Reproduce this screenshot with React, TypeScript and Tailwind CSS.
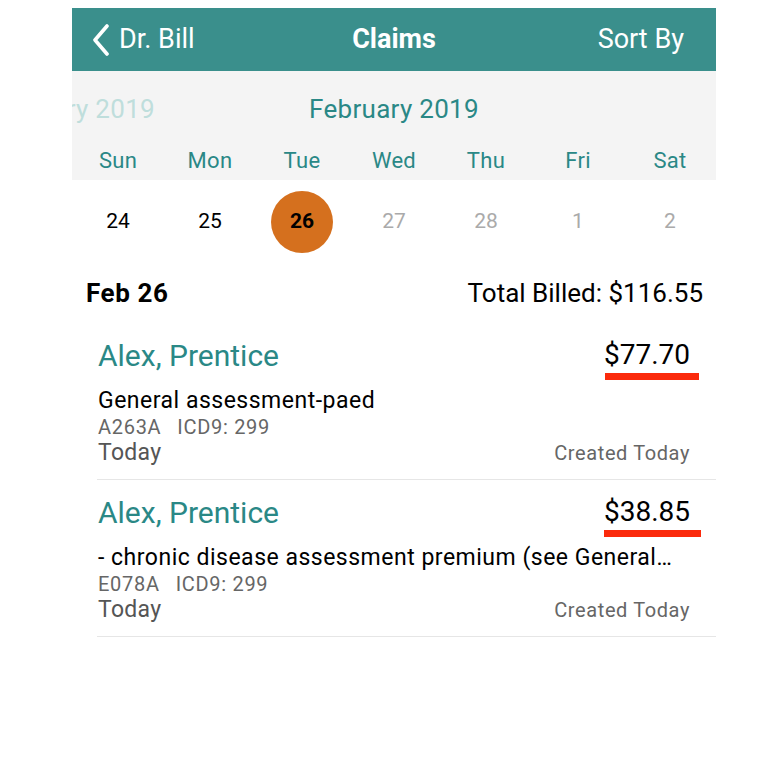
import React from "react";

const font = { fontFamily: "Roboto, 'Liberation Sans', sans-serif" };

function Claim({
  price,
  desc,
  code,
  ulRight,
  ulWidth,
}: {
  price: string;
  desc: string;
  code: string;
  ulRight: string;
  ulWidth: string;
}) {
  return (
    <div className="flex flex-col pt-[12px]">
      <div className="flex h-[40px] items-center justify-between pl-[26px] pr-[26px]">
        <span className="text-[30px] text-[#2a8886]">Alex, Prentice</span>
        <span className="relative text-[28px] text-black">
          {price}
          <span className={`absolute top-[39px] h-[7px] bg-[#fb2a0c] ${ulRight} ${ulWidth}`} />
        </span>
      </div>
      <div className="mt-[13px] flex h-[26px] items-center pl-[26px] text-[23px] tracking-[0.5px] text-black">
        <span className="whitespace-nowrap">{desc}</span>
      </div>
      <div className="flex h-[26px] items-center pl-[26px] text-[20px] tracking-[0.7px] text-[#666]">
        <span>{code}</span>
        <span className="ml-[16px]">ICD9: 299</span>
      </div>
      <div className="flex h-[26px] items-center justify-between pl-[26px] pr-[26px]">
        <span className="text-[23px] tracking-[0.3px] text-[#555]">Today</span>
        <span className="text-[20px] tracking-[0.6px] text-[#666]">Created Today</span>
      </div>
      <div className="mt-[13px] ml-[25px] h-px bg-[#e6e6e6]" />
    </div>
  );
}

export default function App() {
  const days = ["Sun", "Mon", "Tue", "Wed", "Thu", "Fri", "Sat"];
  const dates = [
    { d: "24", c: "text-black" },
    { d: "25", c: "text-black" },
    { d: "26", c: "sel" },
    { d: "27", c: "text-[#aaa]" },
    { d: "28", c: "text-[#aaa]" },
    { d: "1", c: "text-[#aaa]" },
    { d: "2", c: "text-[#aaa]" },
  ];
  return (
    <div className="h-[769px] w-[769px] bg-white" style={font}>
      <div className="ml-[72px] w-[644px] pt-[8px]">
        <div className="grid h-[63px] grid-cols-[1fr_auto_1fr] items-center bg-[#3a8f8c] text-white">
          <div className="flex items-center pl-[19px]">
            <svg width="20" height="32" viewBox="0 0 20 32" className="mr-[8px]">
              <path d="M16 2 L4 16 L16 30" fill="none" stroke="white" strokeWidth="3.6" strokeLinecap="round" strokeLinejoin="round" />
            </svg>
            <span className="text-[27px]">Dr. Bill</span>
          </div>
          <div className="text-[27px] font-bold">Claims</div>
          <div className="pr-[32px] text-right text-[27px]">Sort By</div>
        </div>
        <div className="flex h-[109px] flex-col bg-[#f4f4f4] pt-[19px]">
          <div className="grid h-[36px] grid-cols-[83px_1fr_83px] items-center">
            <div className="flex justify-end overflow-hidden whitespace-nowrap text-[26px] tracking-[0.3px] text-[#bfdedc]">
              January 2019
            </div>
            <div className="text-center text-[26px] tracking-[0.3px] text-[#2a8886]">February 2019</div>
            <div />
          </div>
          <div className="mt-[18px] grid h-[30px] grid-cols-7 items-center">
            {days.map((d) => (
              <div key={d} className="text-center text-[22px] tracking-[0.3px] text-[#2a8886]">
                {d}
              </div>
            ))}
          </div>
        </div>
        <div className="grid h-[84px] grid-cols-7 items-center">
          {dates.map((x) =>
            x.c === "sel" ? (
              <div key={x.d} className="flex justify-center">
                <div className="flex h-[62px] w-[62px] items-center justify-center rounded-full bg-[#d5701e] text-[21px] font-bold text-black">
                  {x.d}
                </div>
              </div>
            ) : (
              <div key={x.d} className={`text-center text-[21px] ${x.c}`}>
                {x.d}
              </div>
            )
          )}
        </div>
        <div className="flex h-[59px] items-center justify-between pl-[14px] pr-[13px]">
          <span className="text-[26px] font-bold tracking-[0.6px] text-black">Feb 26</span>
          <span className="text-[26px] text-black">Total Billed: $116.55</span>
        </div>
        <Claim price="$77.70" desc="General assessment-paed" code="A263A" ulRight="right-[-9px]" ulWidth="w-[94px]" />
        <Claim
          price="$38.85"
          desc="- chronic disease assessment premium (see General…"
          code="E078A"
          ulRight="right-[-11px]"
          ulWidth="w-[97px]"
        />
      </div>
    </div>
  );
}
